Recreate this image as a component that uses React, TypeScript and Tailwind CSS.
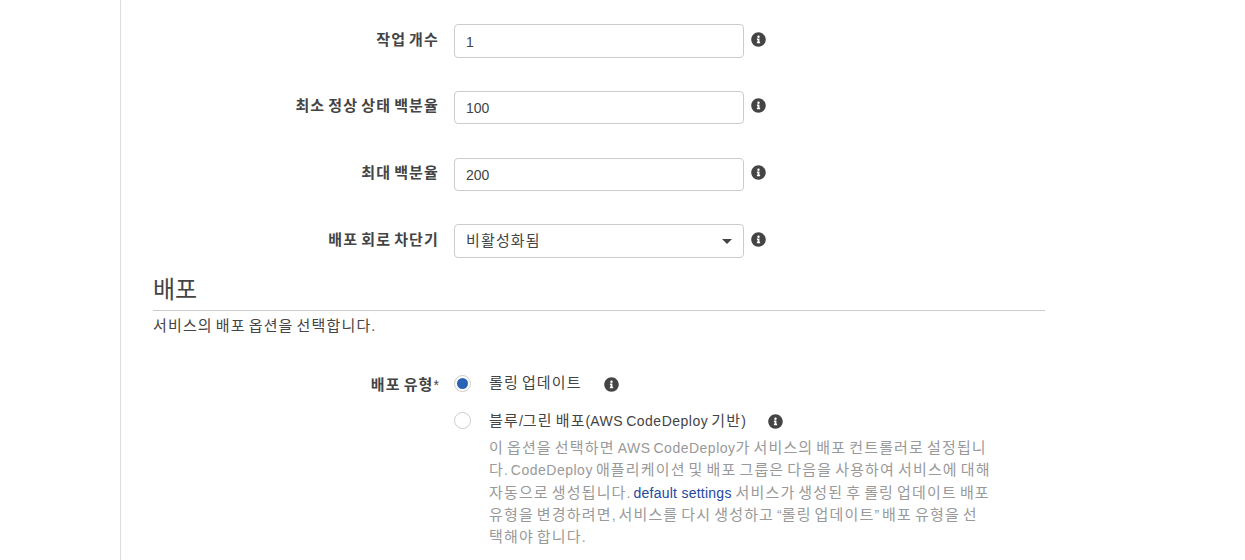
import React from "react";
import { FaInfoCircle } from "react-icons/fa";

const FONT = "font-['Liberation_Sans','Noto_Sans_CJK_KR',sans-serif]";

function K({ children }: { children: string }) {
  const parts = children.split(/(CodeDeploy|AWS|[가-힣]+)/).filter(Boolean);
  return (
    <>
      {parts.map((p, i) =>
        /[가-힣]/.test(p) ? (
          <span key={i} className="text-[15px] tracking-[1.15px]">{p}</span>
        ) : p === "CodeDeploy" || p === "AWS" ? (
          <span key={i} className="tracking-[0.5px]">{p}</span>
        ) : (
          <span key={i} className="[word-spacing:-0.9px]">{p}</span>
        )
      )}
    </>
  );
}

function Info() {
  return <FaInfoCircle className="text-[15px] text-[#444444] shrink-0" />;
}

function FieldRow({ label, value, select }: { label: string; value: string; select?: boolean }) {
  return (
    <div className="flex items-center h-[33.5px]">
      <div className="w-[286px] text-right text-[14px] font-bold text-[#444444] -mt-[2px]"><K>{label}</K></div>
      <div className="ml-[15px] w-[290px] h-[33.5px] rounded-[4px] border border-[#cccccc] bg-white flex items-center justify-between pl-[11px] pr-[11px] text-[14px] text-[#444444]">
        <span className={select ? "" : "mt-[2px]"}><K>{value}</K></span>
        {select && <span className="w-0 h-0 border-x-[5.5px] border-x-transparent border-t-[5.5px] border-t-[#444444]" />}
      </div>
      <div className="ml-[7px] -mt-[4px] flex">
        <Info />
      </div>
    </div>
  );
}

function Radio({ checked }: { checked?: boolean }) {
  return (
    <span className={`w-[17px] h-[17px] rounded-full border border-[#cccccc] bg-white flex items-center justify-center shrink-0 ${checked ? "-mt-[1px]" : ""}`}>
      {checked && <span className="w-[11px] h-[11px] rounded-full bg-[#2a62b5]" />}
    </span>
  );
}

export default function App() {
  return (
    <div className={`${FONT} w-full h-[560px] overflow-hidden bg-white`}>
      <div className="ml-[120px] w-[925px] h-full border-l border-[#dddddd] pl-[32px] pt-[24.3px]">
        <div className="flex flex-col gap-[33.2px]">
          <FieldRow label="작업 개수" value="1" />
          <FieldRow label="최소 정상 상태 백분율" value="100" />
          <FieldRow label="최대 백분율" value="200" />
          <FieldRow label="배포 회로 차단기" value="비활성화됨" select />
        </div>

        <h2 className="mt-[14.1px] h-[39px] border-b border-[#cccccc] text-[24px] leading-[36px] text-[#444444] font-normal">배포</h2>
        <p className="mt-[5px] text-[14px] leading-[20px] text-[#444444]"><K>서비스의 배포 옵션을 선택합니다.</K></p>

        <div className="mt-[38px] flex">
          <div className="w-[286px] pt-[1px] text-right text-[14px] font-bold text-[#444444] leading-[20px]">
            <K>배포 유형</K><span className="font-normal">*</span>
          </div>
          <div className="ml-[15px] flex-1">
            <div className="flex items-center h-[20px]">
              <Radio checked />
              <span className="ml-[18px] text-[14px] text-[#444444] -mt-[1px]"><K>롤링 업데이트</K></span>
              <span className="ml-[22px] mt-[2px] flex"><Info /></span>
            </div>
            <div className="mt-[17px] flex items-center h-[20px]">
              <Radio />
              <span className="ml-[18px] text-[14px] text-[#444444] mt-[1px]"><K>블루/그린 배포(AWS CodeDeploy 기반)</K></span>
              <span className="ml-[22px] mt-[1px] flex"><Info /></span>
            </div>
            <p className="mt-[6px] ml-[35px] w-[520px] text-[14px] leading-[22.3px] text-[#999999] whitespace-nowrap">
              <K>이 옵션을 선택하면 AWS CodeDeploy가 서비스의 배포 컨트롤러로 설정됩니</K><br />
              <K>다. CodeDeploy 애플리케이션 및 배포 그룹은 다음을 사용하여 서비스에 대해</K><br />
              <K>자동으로 생성됩니다. </K><span className="text-[#23479e] tracking-[0.25px]">default settings</span> <K>서비스가 생성된 후 롤링 업데이트 배포</K><br />
              <K>유형을 변경하려면, 서비스를 다시 생성하고 “롤링 업데이트” 배포 유형을 선</K><br />
              <K>택해야 합니다.</K>
            </p>
          </div>
        </div>
      </div>
    </div>
  );
}
